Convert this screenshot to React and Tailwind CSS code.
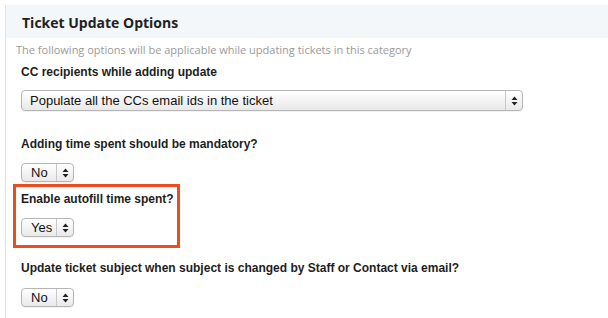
import React from 'react';

function Arrows() {
  return (
    <svg width="7" height="10" viewBox="0 0 7 10">
      <path d="M3.5 0.5 L6.5 4 H0.5 Z" fill="#222" />
      <path d="M3.5 9.5 L6.5 6 H0.5 Z" fill="#222" />
    </svg>
  );
}

function Select({ value, wide }) {
  return (
    <div
      className={`flex items-stretch rounded-[4px] border border-[#b5b5b5] bg-gradient-to-b from-[#ffffff] to-[#e9e9e9] shadow-[0_1px_0_rgba(0,0,0,0.05)] ${wide ? 'h-[21px] w-[502px]' : 'h-[19px] w-[53px]'}`}
    >
      <div className={`flex flex-1 items-center text-[13px] text-[#111] ${wide ? 'pl-[8px]' : 'pl-[9px]'}`}>{value}</div>
      <div className="flex w-[17px] items-center justify-center border-l border-[#c8c8c8]">
        <Arrows />
      </div>
    </div>
  );
}

function Label({ children }) {
  return <div className="text-[12px] font-bold leading-[15px] text-[#1e1e1e]">{children}</div>;
}

export default function App() {
  return (
    <div className="h-[318px] w-[608px] overflow-hidden bg-white pt-[5px] pl-[5px] font-['Liberation_Sans',Arial,sans-serif]">
      <div className="h-full border-l border-[#e2e2e2]">
        <div className="flex h-[33px] items-center bg-[#f3f7fa] pl-[16px] pt-[1px] font-['Open_Sans',sans-serif] text-[14px] font-bold text-[#222]">
          Ticket Update Options
        </div>
        <div className="pl-[10px] pt-[5px] font-['Open_Sans',sans-serif] text-[11px] leading-[14px] text-[#9a9a9a]">
          The following options will be applicable while updating tickets in this category
        </div>
        <div className="pl-[15px]">
          <div className="pt-[8px]">
            <Label>CC recipients while adding update</Label>
          </div>
          <div className="pt-[10px]">
            <Select value="Populate all the CCs email ids in the ticket" wide />
          </div>
          <div className="pt-[26px]">
            <Label>Adding time spent should be mandatory?</Label>
          </div>
          <div className="pt-[11px]">
            <Select value="No" />
          </div>
        </div>
        <div className="ml-[7px] mt-[2px] h-[64px] w-[167px] border-[3px] border-[#f04a1f] pl-[5px]">
          <div className="pt-[5px]">
            <Label>Enable autofill time spent?</Label>
          </div>
          <div className="pt-[11px]">
            <Select value="Yes" />
          </div>
        </div>
        <div className="pl-[15px]">
          <div className="pt-[13px]">
            <Label>Update ticket subject when subject is changed by Staff or Contact via email?</Label>
          </div>
          <div className="pt-[12px]">
            <Select value="No" />
          </div>
        </div>
      </div>
    </div>
  );
}
